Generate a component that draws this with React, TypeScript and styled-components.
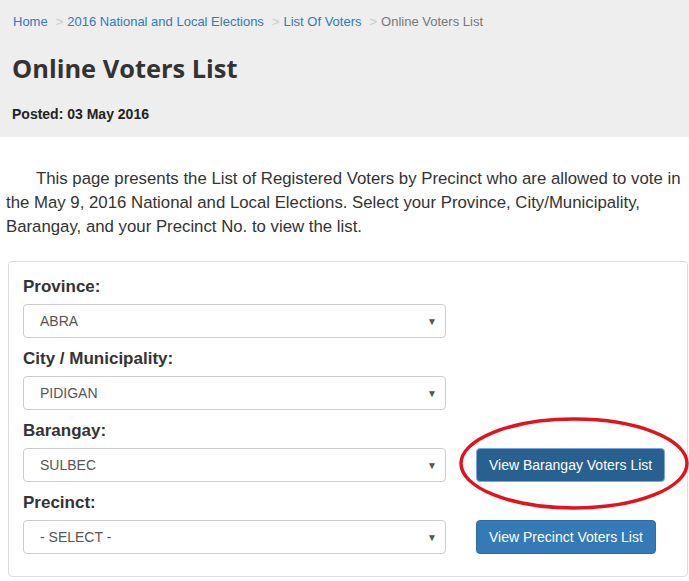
import styled, { createGlobalStyle } from "styled-components"

const Global = createGlobalStyle`
  body {
    margin: 0;
    background: #fff;
    font-family: "Liberation Sans", Arial, sans-serif;
    color: #333;
  }
`

const Header = styled.div`
  background: #eeeeee;
  height: 137px;
  padding: 13px 12px 0 13px;
  box-sizing: border-box;
`
const Crumbs = styled.div`
  display: flex;
  align-items: center;
  font-size: 13px;
  line-height: 18px;
  a {
    color: #337ab7;
    text-decoration: none;
  }
  span.sep {
    color: #ccc;
    padding: 0 4px 0 8px;
  }
  span.active {
    color: #777;
  }
`
const Title = styled.h1`
  margin: 0;
  padding-top: 20px;
  margin-left: -1px;
  font-family: "Open Sans", sans-serif;
  font-weight: 700;
  font-size: 25.4px;
  line-height: 34px;
  color: #333;
`
const Posted = styled.div`
  margin-top: 20px;
  margin-left: -1px;
  font-weight: 700;
  font-size: 14px;
  line-height: 18px;
  color: #222;
`
const Intro = styled.p`
  margin: 30px 0 0 0;
  padding: 0 6px;
  text-indent: 30px;
  font-size: 16.8px;
  line-height: 24px;
  color: #333;
`
const Panel = styled.div`
  margin: 22px 1px 0 8px;
  border: 1px solid #ddd;
  border-radius: 4px;
  padding: 14px 14px 22px 14px;
  display: flex;
  flex-direction: column;
  gap: 10px;
`
const Row = styled.div`
  display: flex;
  align-items: flex-end;
  gap: 30px;
`
const Field = styled.div`
  width: 423px;
  display: flex;
  flex-direction: column;
  gap: 6px;
`
const Label = styled.label`
  font-weight: 700;
  font-size: 17px;
  line-height: 22px;
  color: #333;
`
const Select = styled.div`
  height: 34px;
  box-sizing: border-box;
  border: 1px solid #ccc;
  border-radius: 4px;
  padding: 0 8px 0 16px;
  display: flex;
  align-items: center;
  justify-content: space-between;
  font-size: 14px;
  color: #555;
  background: #fff;
`
const Caret = styled.span`
  font-size: 10px;
  color: #555;
`
const ButtonSlot = styled.div`
  position: relative;
`
const Button = styled.button<{ $active?: boolean }>`
  height: 34px;
  padding: 0 12px;
  font-family: "Liberation Sans", Arial, sans-serif;
  font-size: 14px;
  color: #fff;
  border-radius: 4px;
  background: ${p => (p.$active ? "#286090" : "#337ab7")};
  border: 1px solid ${p => (p.$active ? "#7aa6e0" : "#2e6da4")};
  cursor: pointer;
`
const Ring = styled.svg`
  position: absolute;
  left: -17px;
  top: -31px;
  width: 230px;
  height: 93px;
  overflow: visible;
  pointer-events: none;
`

const fields = [
  { label: "Province:", value: "ABRA" },
  { label: "City / Municipality:", value: "PIDIGAN" },
  { label: "Barangay:", value: "SULBEC", button: "View Barangay Voters List", active: true },
  { label: "Precinct:", value: "- SELECT -", button: "View Precinct Voters List" },
]

const App = () => {
  return (
    <>
      <Global />
      <Header>
        <Crumbs>
          <a href="#">Home</a>
          <span className="sep">&gt;</span>
          <a href="#">2016 National and Local Elections</a>
          <span className="sep">&gt;</span>
          <a href="#">List Of Voters</a>
          <span className="sep">&gt;</span>
          <span className="active">Online Voters List</span>
        </Crumbs>
        <Title>Online Voters List</Title>
        <Posted>Posted: 03 May 2016</Posted>
      </Header>
      <Intro>
        This page presents the List of Registered Voters by Precinct who are allowed to vote in the May 9, 2016
        National and Local Elections. Select your Province, City/Municipality, Barangay, and your Precinct No. to
        view the list.
      </Intro>
      <Panel>
        {fields.map(f => (
          <Row key={f.label}>
            <Field>
              <Label>{f.label}</Label>
              <Select>
                <span>{f.value}</span>
                <Caret>▼</Caret>
              </Select>
            </Field>
            {f.button && (
              <ButtonSlot>
                <Button $active={f.active}>{f.button}</Button>
                {f.active && (
                  <Ring viewBox="0 0 230 93">
                    <ellipse cx="115" cy="46.5" rx="113" ry="44.5" fill="none" stroke="#e0141e" strokeWidth="3.5" />
                  </Ring>
                )}
              </ButtonSlot>
            )}
          </Row>
        ))}
      </Panel>
    </>
  )
}

export default App
